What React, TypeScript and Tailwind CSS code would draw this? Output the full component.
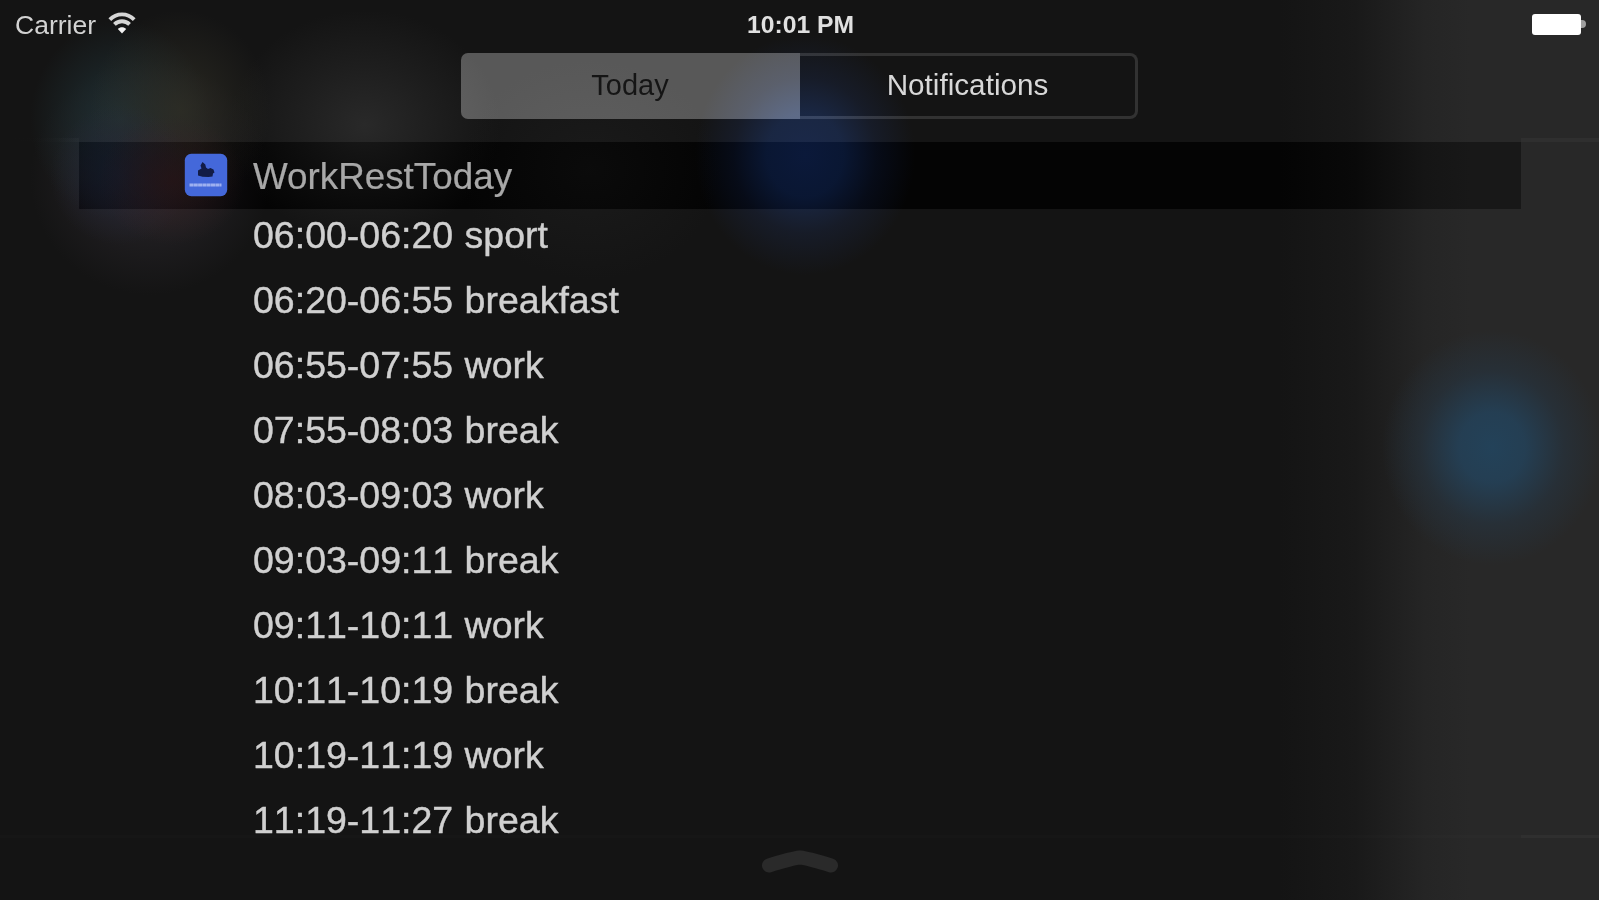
import clsx from "clsx";

const SCHEDULE = [
  "06:00-06:20 sport",
  "06:20-06:55 breakfast",
  "06:55-07:55 work",
  "07:55-08:03 break",
  "08:03-09:03 work",
  "09:03-09:11 break",
  "09:11-10:11 work",
  "10:11-10:19 break",
  "10:19-11:19 work",
  "11:19-11:27 break",
];

// Colour spots of the home screen icons showing through the dark panel.
const GLOWS = [
  "left-[230px] top-[10px] h-[230px] w-[270px] bg-[radial-gradient(closest-side,#292929,#25252599_50%,#25252500)]",
  "left-[30px] top-[60px] h-[235px] w-[240px] bg-[radial-gradient(closest-side,#2b262b,#28252a88_50%,#28252a00)]",
  "left-[30px] top-[20px] h-[200px] w-[180px] bg-[radial-gradient(closest-side,#203136e6,#1f2f3388_50%,#1f303400)]",
  "left-[90px] top-[10px] h-[200px] w-[180px] bg-[radial-gradient(closest-side,#2f2e25cc,#2f2e2566_50%,#2f2e2500)]",
  "left-[50px] top-[105px] h-[140px] w-[140px] bg-[radial-gradient(closest-side,#242a3acc,#26283877_50%,#26283800)]",
  "left-[100px] top-[115px] h-[130px] w-[145px] bg-[radial-gradient(closest-side,#362426cc,#36242666_50%,#36242600)]",
  "left-[460px] top-[60px] h-[220px] w-[260px] bg-[radial-gradient(closest-side,#1f1f1f99,#1f1f1f00)]",
  "left-[695px] top-[35px] h-[240px] w-[220px] bg-[radial-gradient(closest-side,#1b294a,#1a2846ee_35%,#19223988_65%,#14141400)]",
  "left-[1382px] top-[330px] h-[235px] w-[220px] bg-[radial-gradient(closest-side,#234259,#244056ee_30%,#26364488_65%,#28282800)]",
];

function Backdrop() {
  return (
    <div className="absolute inset-0 -z-10 overflow-hidden bg-[linear-gradient(90deg,#141414_1280px,#191919_1355px,#252525_1425px,#282828_1470px)]">
      {GLOWS.map((glow) => (
        <div key={glow} className={clsx("absolute", glow)} />
      ))}
    </div>
  );
}

function WifiIcon() {
  return (
    <svg viewBox="0 0 28 22" className="-mt-[4px] h-[22px] w-[28px]" fill="none" stroke="#d6d6d6" strokeWidth="3.8">
      <path d="M1.8 7.6C8.6.6 19.4.6 26.2 7.6" />
      <path d="M6.4 12.4c4.3-4.2 10.9-4.2 15.2 0" />
      <path d="M14 21.4l-4.2-4.5c2.3-2.1 6.1-2.1 8.4 0z" fill="#f2f2f2" stroke="none" />
    </svg>
  );
}

function BatteryIcon() {
  return (
    <div className="-mt-[2px] flex items-center">
      <div className="h-[21px] w-[49px] rounded-[3px] bg-white" />
      <div className="h-[8px] w-[5px] rounded-r-full bg-[#a0a0a0]" />
    </div>
  );
}

function StatusBar() {
  return (
    <div className="grid h-[50px] grid-cols-3 items-center pl-[15px] pr-[13px]">
      <div className="flex items-center gap-[12px]">
        <span className="text-[26.5px] leading-none text-[#d2d2d2]">Carrier</span>
        <WifiIcon />
      </div>
      <span className="text-center text-[24.7px] font-bold leading-none text-[#e0e0e0]">10:01 PM</span>
      <div className="flex justify-end">
        <BatteryIcon />
      </div>
    </div>
  );
}

// Additive blending: black label lets the backdrop through, like a vibrancy view.
function Tabs() {
  return (
    <div className="mx-auto mt-[3px] flex h-[66px] w-[677px] text-[29px] mix-blend-plus-lighter">
      <button type="button" className="w-[339px] rounded-l-[7px] bg-[#444444] pb-[1px] pr-[1px] text-black">
        Today
      </button>
      <button
        type="button"
        className="flex-1 rounded-r-[8px] border-3 border-l-0 border-[#1e1e1e] pb-[1px] text-[29.7px] text-[#c4c4c4]"
      >
        Notifications
      </button>
    </div>
  );
}

function AppIcon() {
  return (
    <svg viewBox="0 0 44 44" className="-mt-[2px] size-[44px]">
      <rect x=".8" y=".8" width="42.4" height="42.4" rx="6.5" fill="#4468da" />
      <path
        d="M14 22.500v-5l3.500-2-1-3 2-3.500 2.800 2.500.7 3 2 1.500 2.500-1 3 1.500 1 3-1.500 1-.5 3-4 .5-6-.2z"
        fill="#121c46"
      />
      <path d="M5.5 32h32" stroke="#9db0f0" strokeWidth="3.2" strokeDasharray="4 .3" />
    </svg>
  );
}

function WidgetHeader() {
  return (
    <div className="relative ml-[79px] mr-[78px] h-[67px] shrink-0">
      <div className="absolute inset-0 bg-[#101010] mix-blend-difference" />
      <div className="relative flex h-full items-center gap-[25px] pl-[105px]">
        <AppIcon />
        <h2 className="pt-[4px] text-[36.8px] leading-none text-[#a8a8a8] [-webkit-text-stroke:0.2px_#a8a8a8]">
          WorkRestToday
        </h2>
      </div>
    </div>
  );
}

export default function App() {
  return (
    <div className="relative isolate flex h-[900px] w-[1599px] flex-col overflow-hidden font-['Liberation_Sans',Arial,sans-serif]">
      <Backdrop />
      <StatusBar />
      <Tabs />
      <div className="mt-[19px] flex h-[4px] justify-between mix-blend-plus-lighter">
        <div className="w-[79px] bg-linear-to-r from-black to-[#060606]" />
        <div className="w-[78px] bg-[#070707]" />
      </div>
      <WidgetHeader />
      <ul className="h-[626px] shrink-0 pl-[253px]">
        {SCHEDULE.map((item) => (
          <li
            key={item}
            className="mb-[13px] h-[52px] text-[37.5px] leading-[52px] text-[#d0d0d0] [font-kerning:none] [word-spacing:1px] [-webkit-text-stroke:0.4px_#d0d0d0]"
          >
            {item}
          </li>
        ))}
      </ul>
      <div className="flex h-[3px] shrink-0 justify-end bg-[#020202] mix-blend-plus-lighter">
        <div className="w-[78px] bg-[#070707]" />
      </div>
      <div className="flex justify-center pt-[10px]">
        <svg viewBox="0 0 78 26" className="h-[26px] w-[78px]" fill="none">
          <path d="M8 17.5Q30 10.5 39 9.5Q48 10.5 70 17.5" stroke="#2a2a2a" strokeWidth="14" strokeLinecap="round" />
        </svg>
      </div>
    </div>
  );
}
